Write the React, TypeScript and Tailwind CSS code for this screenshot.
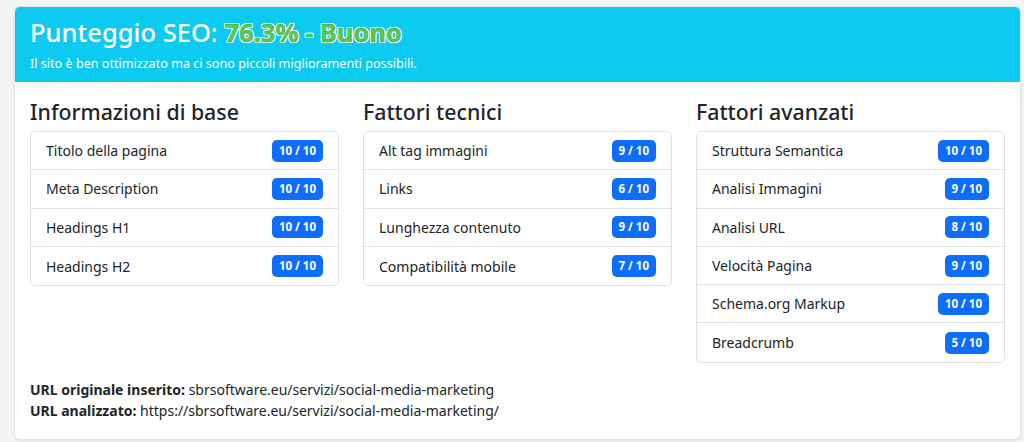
const sections = [
  {
    title: "Informazioni di base",
    items: [
      ["Titolo della pagina", "10 / 10"],
      ["Meta Description", "10 / 10"],
      ["Headings H1", "10 / 10"],
      ["Headings H2", "10 / 10"],
    ],
  },
  {
    title: "Fattori tecnici",
    items: [
      ["Alt tag immagini", "9 / 10"],
      ["Links", "6 / 10"],
      ["Lunghezza contenuto", "9 / 10"],
      ["Compatibilità mobile", "7 / 10"],
    ],
  },
  {
    title: "Fattori avanzati",
    items: [
      ["Struttura Semantica", "10 / 10"],
      ["Analisi Immagini", "9 / 10"],
      ["Analisi URL", "8 / 10"],
      ["Velocità Pagina", "9 / 10"],
      ["Schema.org Markup", "10 / 10"],
      ["Breadcrumb", "5 / 10"],
    ],
  },
]

export default function App() {
  return (
    <div className="min-h-screen bg-[#f4f4f4] pl-[14px] pr-[3px] pt-[6px] font-['Noto_Sans',sans-serif] text-[#212529]">
      <div className="overflow-hidden rounded-[6px] border border-[#dee2e6] bg-white shadow-[0_1px_2px_rgba(0,0,0,0.08)]">
        {/* Header */}
        <div className="h-[75px] bg-[#0dcaf0] px-[15px] pt-[10px] text-white">
          <h2 className="text-[25.5px] leading-[30px] font-medium">
            Punteggio SEO:{" "}
            <span className="font-bold text-[#55c955] [-webkit-text-stroke:0.4px_#2e9a3c] [text-shadow:1px_0_0_#fff,-1px_0_0_#fff,0_1px_0_#fff,0_-1px_0_#fff,1px_1px_0_#fff,-1px_-1px_0_#fff,1px_-1px_0_#fff,-1px_1px_0_#fff]">
              76.3% - Buono
            </span>
          </h2>
          <p className="mt-[9px] text-[12.6px] leading-[16px]">
            Il sito è ben ottimizzato ma ci sono piccoli miglioramenti possibili.
          </p>
        </div>

        {/* Body */}
        <div className="px-[15px] pt-[16px] pb-[18px]">
          <div className="grid grid-cols-3 items-start gap-6">
            {sections.map((s) => (
              <div key={s.title}>
                <h4 className="text-[21.3px] leading-[28px] font-medium">{s.title}</h4>
                <ul className="mt-[5px] rounded-[5px] border border-[#dee2e6]">
                  {s.items.map(([label, score], i) => (
                    <li
                      key={label}
                      className={
                        "flex h-[38.3px] items-center justify-between pl-[15px] pr-[15px] text-[14px] " +
                        (i < s.items.length - 1 ? "border-b border-[#dee2e6]" : "")
                      }
                    >
                      <span>{label}</span>
                      <span className="rounded-[5px] bg-[#0d6efd] px-[7px] py-[3px] text-[11.5px] leading-[16px] font-bold text-white">
                        {score}
                      </span>
                    </li>
                  ))}
                </ul>
              </div>
            ))}
          </div>

          <div className="mt-[16px] text-[14px] leading-[21px]">
            <p>
              <strong className="font-bold">URL originale inserito:</strong> sbrsoftware.eu/servizi/social-media-marketing
            </p>
            <p>
              <strong className="font-bold">URL analizzato:</strong> https://sbrsoftware.eu/servizi/social-media-marketing/
            </p>
          </div>
        </div>
      </div>
    </div>
  )
}
